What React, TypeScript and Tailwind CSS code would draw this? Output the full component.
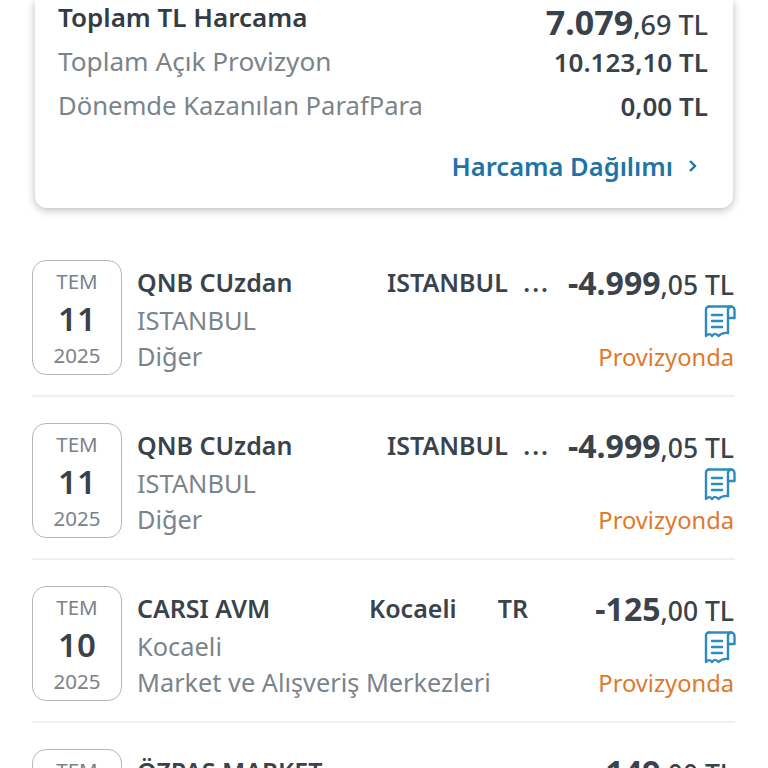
const font = { fontFamily: '"Noto Sans", sans-serif' };

function Receipt() {
  return (
    <svg width="33" height="34" viewBox="0 0 33 34" fill="none" stroke="#2b8cbe" strokeWidth="2.4" strokeLinejoin="round" strokeLinecap="round">
      <path d="M6 1.500H28a3.500 3.500 0 0 1 3.500 3.500V13H25" />
      <path d="M25 5V28" />
      <path d="M28 1.500a3.500 3.500 0 0 0-3 3.500" />
      <path d="M6 1.500a3 3 0 0 0-3 3V31c2.500-2.500 4-2.500 6 0 2-2.800 4-2.800 6.500 0 2.500-2.800 5-3.500 9.500-3" />
      <path d="M9 10H19M9 16H19M9 22H19" />
    </svg>
  );
}

function Row({ day, name, city, mid, end, cat, midLeft, midWidth, intPart, dec }: { day: string; name: string; city: string; mid?: string; end?: string; cat: string; midLeft?: string; midWidth?: string; intPart: string; dec: string }) {
  return (
    <div className="mx-[32px] w-[703px] shrink-0 border-b-2 border-[#eef0f1] h-[163px] pt-[26px] flex">
      <div className="w-[90px] h-[115px] shrink-0 rounded-[14px] border border-[#b4b7ba] flex flex-col items-center">
        <div className="text-[20.500px] leading-[24px] mt-[8px] text-[#7b8289]">TEM</div>
        <div className="text-[33px] leading-[38px] mt-[7px] font-semibold text-[#39424a]">{day}</div>
        <div className="text-[20.500px] leading-[24px] mt-[5px] text-[#7b8289]">2025</div>
      </div>
      <div className="ml-[15px] flex-1 relative">
        <div className="flex items-start justify-between">
          <div>
            <div className="text-[25px] leading-[32px] mt-[6px] font-semibold text-[#3a434b] whitespace-nowrap">{name}</div>
            <div className="text-[25.400px] leading-[36px] mt-[4px] text-[#7b838b]">{city}</div>
            <div className="text-[25.300px] leading-[36px] text-[#7b838b] whitespace-nowrap">{cat}</div>
          </div>
          <div className="flex flex-col items-end pr-[1px]">
            <div className="text-[26.500px] leading-[32px] mt-[7px] font-medium text-[#3a434b] whitespace-nowrap">
              <span className="text-[32px] font-bold">{intPart}</span>
              <span>{dec}</span>
            </div>
            <div className="mt-[4px] mr-[-2px]"><Receipt /></div>
            <div className="text-[23.700px] leading-[32px] mt-[2px] text-[#e0782a]">Provizyonda</div>
          </div>
        </div>
        {mid ? (
          <div className={`absolute top-[6px] ${midLeft} ${midWidth} text-[25px] leading-[32px] font-semibold text-[#3a434b] flex justify-between whitespace-nowrap`}>
            <span>{mid}</span>
            <span className={end === "..." ? "tracking-[2px]" : ""}>{end}</span>
          </div>
        ) : null}
      </div>
    </div>
  );
}

export default function App() {
  return (
    <div style={font} className="w-[768px] h-[768px] overflow-hidden bg-white flex flex-col">
      <div className="mx-[35px] w-[698px] h-[208px] shrink-0 bg-white rounded-b-[12px] shadow-[0_2px_8px_rgba(0,0,0,0.28)] pl-[23px] pr-[25px] flex flex-col">
        <div className="flex justify-between items-start h-[40px]">
          <span className="text-[26px] leading-[34px] font-semibold text-[#333c44]">Toplam TL Harcama</span>
          <span className="text-[27px] leading-[44px] text-[#39424a] font-medium"><span className="text-[34px] font-bold">7.079</span>,69 TL</span>
        </div>
        <div className="flex justify-between items-center h-[44px]">
          <span className="text-[26.200px] text-[#7b838b]">Toplam Açık Provizyon</span>
          <span className="text-[26px] font-semibold text-[#39424a]">10.123,10 TL</span>
        </div>
        <div className="flex justify-between items-center h-[44px]">
          <span className="text-[25.600px] text-[#7b838b]">Dönemde Kazanılan ParafPara</span>
          <span className="text-[26px] font-semibold text-[#39424a]">0,00 TL</span>
        </div>
        <div className="flex justify-end items-center mt-[20px] h-[36px] pr-[9px] gap-[14px]">
          <span className="text-[25.500px] font-semibold text-[#1f74a7]">Harcama Dağılımı</span>
          <svg width="12" height="14" viewBox="0 0 12 14" fill="none" stroke="#1f74a7" strokeWidth="2.4"><path d="M3 2l5 5-5 5" /></svg>
        </div>
      </div>
      <div className="h-[26px] shrink-0" />
      <Row day="11" name="QNB CUzdan" city="ISTANBUL" mid="ISTANBUL" end="..." midLeft="left-[250px]" midWidth="w-[163px]" cat="Diğer" intPart="-4.999" dec=",05 TL" />
      <Row day="11" name="QNB CUzdan" city="ISTANBUL" mid="ISTANBUL" end="..." midLeft="left-[250px]" midWidth="w-[163px]" cat="Diğer" intPart="-4.999" dec=",05 TL" />
      <Row day="10" name="CARSI AVM" city="Kocaeli" mid="Kocaeli" end="TR" midLeft="left-[232px]" midWidth="w-[159px]" cat="Market ve Alışveriş Merkezleri" intPart="-125" dec=",00 TL" />
      <Row day="10" name="ÖZPAS MARKET" city="Kocaeli" cat="Diğer" intPart="-149" dec=",00 TL" />
    </div>
  );
}
